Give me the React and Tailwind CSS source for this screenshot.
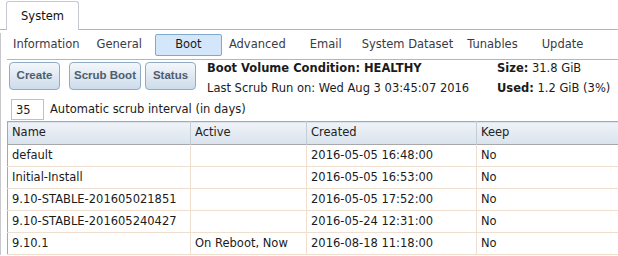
import { useState } from 'react';

const subTabs = ['Information', 'General', 'Boot', 'Advanced', 'Email', 'System Dataset', 'Tunables', 'Update'];

const rows = [
  { name: 'default', active: '', created: '2016-05-05 16:48:00', keep: 'No' },
  { name: 'Initial-Install', active: '', created: '2016-05-05 16:53:00', keep: 'No' },
  { name: '9.10-STABLE-201605021851', active: '', created: '2016-05-05 17:52:00', keep: 'No' },
  { name: '9.10-STABLE-201605240427', active: '', created: '2016-05-24 12:31:00', keep: 'No' },
  { name: '9.10.1', active: 'On Reboot, Now', created: '2016-08-18 11:18:00', keep: 'No' },
];

const ActionButton = ({ children, className = '' }) => (
  <button
    className={`h-[28px] rounded-[4px] border border-[#8fabc6] bg-gradient-to-b from-[#f3f7fb] to-[#cddbea] font-['Liberation_Sans',sans-serif] text-[11.5px] font-bold text-[#4e5d6c] ${className}`}
  >
    {children}
  </button>
);

const App = () => {
  const [tab, setTab] = useState('Boot');
  const [interval, setInterval] = useState('35');

  return (
    <div className="w-[618px] h-[256px] overflow-hidden bg-white text-[11.5px] text-[#1b1b1b]" style={{ fontFamily: 'Verdana, "DejaVu Sans", sans-serif' }}>
      {/* Top tab */}
      <div className="flex h-[30px]">
        <div className="w-[6px] shrink-0 border-b border-[#b4b4bc]" />
        <div className="mt-[1px] flex w-[73px] shrink-0 items-center justify-center rounded-t-[3px] border border-b-0 border-[#c4c8d0] bg-white pt-[1px] text-[#111]">
          System
        </div>
        <div className="flex-1 border-b border-[#b4b4bc]" />
      </div>

      <div className="flex">
        <div className="mt-[3px] w-[7px] shrink-0 border-l border-[#c8c8cc]" />
        <div className="min-w-0 flex-1 overflow-hidden">
          {/* Sub tabs */}
          <div className="flex h-[30px] items-center border-b border-[#b4b4bc] text-[#3a3a44]">
            {subTabs.map((t) => (
              <button
                key={t}
                onClick={() => setTab(t)}
                className={
                  t === 'Boot'
                    ? 'ml-[2px] mr-[7px] h-[22px] w-[67px] shrink-0 rounded-[2px] border border-[#82a8cc] bg-[#d3e6fa] text-[#1a1a1a]'
                    : t === 'Information'
                    ? 'ml-[6px] mr-[17px] shrink-0'
                    : t === 'General'
                    ? 'mr-[11px] shrink-0'
                    : t === 'Advanced'
                    ? 'mr-[24px] shrink-0'
                    : t === 'Email'
                    ? 'mr-[20px] shrink-0'
                    : t === 'System Dataset'
                    ? 'mr-[14px] shrink-0'
                    : t === 'Tunables'
                    ? 'mr-[24px] shrink-0'
                    : 'shrink-0'
                }
              >
                {t}
              </button>
            ))}
          </div>

          {/* Actions + status */}
          <div className="flex h-[38px] pt-[2px]">
            <ActionButton className="ml-[2px] w-[51px] shrink-0">Create</ActionButton>
            <ActionButton className="ml-[9px] w-[72px] shrink-0">Scrub Boot</ActionButton>
            <ActionButton className="ml-[4px] w-[51px] shrink-0">Status</ActionButton>
            <div className="-mt-[1px] ml-[11px] flex w-[290px] shrink-0 flex-col gap-[6px] leading-[14px]">
              <div className="font-bold">Boot Volume Condition: HEALTHY</div>
              <div>Last Scrub Run on: Wed Aug 3 03:45:07 2016</div>
            </div>
            <div className="-mt-[1px] flex shrink-0 flex-col gap-[6px] leading-[14px]">
              <div><span className="font-bold">Size:</span> 31.8 GiB</div>
              <div><span className="font-bold">Used:</span> 1.2 GiB (3%)</div>
            </div>
          </div>

          {/* Scrub interval */}
          <div className="flex h-[23px] items-start pt-[1px]">
            <input
              value={interval}
              onChange={(e) => setInterval(e.target.value)}
              className="ml-[4px] h-[21px] w-[33px] border border-[#c0c0c0] px-[4px] text-[11.5px] outline-none"
            />
            <span className="ml-[6px] mt-[2px]">Automatic scrub interval (in days)</span>
          </div>

          {/* Table */}
          <table className="w-[620px] table-fixed border-collapse border-l border-[#a8a8a8] text-left">
            <thead>
              <tr className="h-[23px] border-y border-[#a8a8a8] bg-gradient-to-b from-[#eff3f8] to-[#dae3ed] text-[#222]">
                <th className="w-[183px] border-r border-[#c4ccd6] pl-[4px] font-normal">Name</th>
                <th className="w-[116px] border-r border-[#c4ccd6] pl-[4px] font-normal">Active</th>
                <th className="w-[170px] border-r border-[#c4ccd6] pl-[4px] font-normal">Created</th>
                <th className="pl-[4px] font-normal">Keep</th>
              </tr>
            </thead>
            <tbody>
              {rows.map((r) => (
                <tr key={r.name} className="h-[22px] border-b border-[#f0dfcf]">
                  <td className="border-r border-[#f0dfcf] pl-[4px]">{r.name}</td>
                  <td className="border-r border-[#f0dfcf] pl-[4px]">{r.active}</td>
                  <td className="border-r border-[#f0dfcf] pl-[4px]">{r.created}</td>
                  <td className="pl-[4px]">{r.keep}</td>
                </tr>
              ))}
            </tbody>
          </table>
        </div>
      </div>
    </div>
  );
};

export default App;
